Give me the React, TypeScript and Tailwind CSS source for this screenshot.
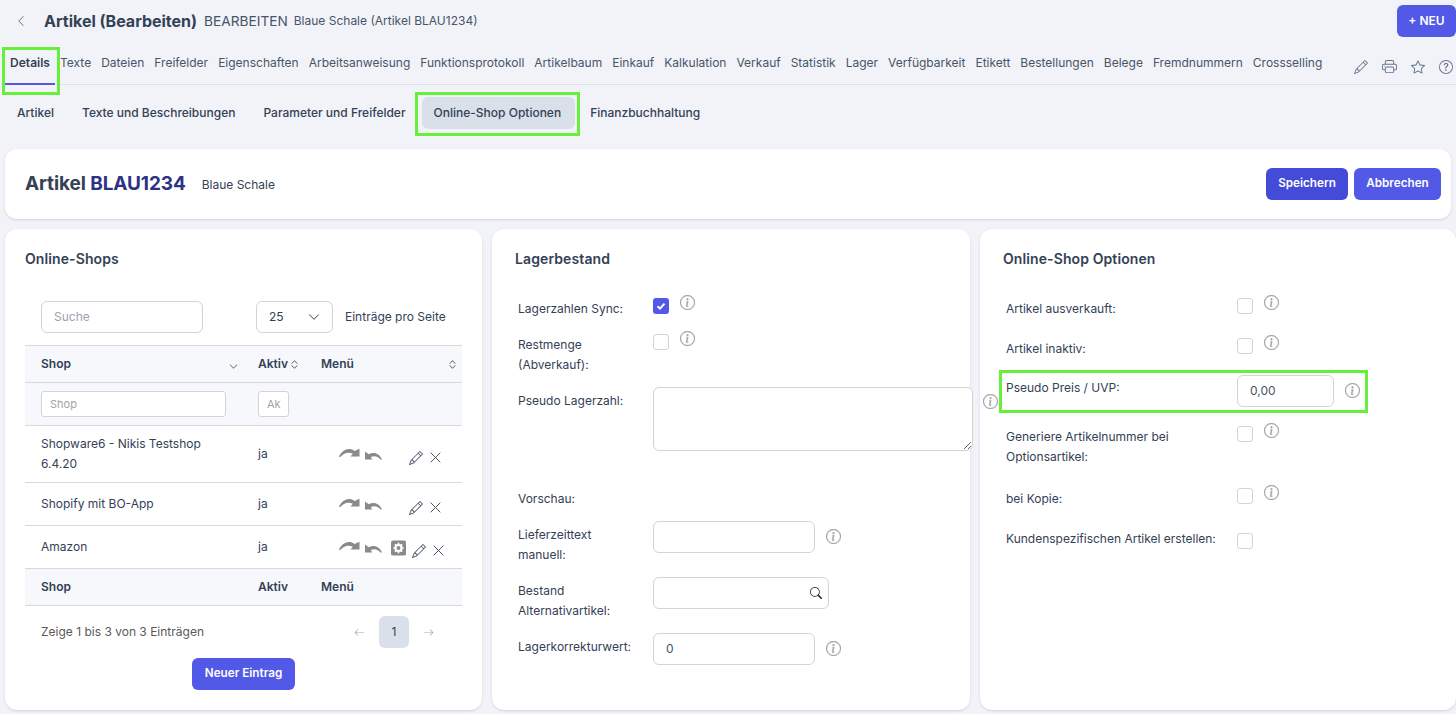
import React from "react";
import {
  BsChevronLeft, BsPencil, BsPrinter, BsStar, BsQuestionCircle, BsInfoCircle, BsSearch,
  BsArrowLeft, BsArrowRight, BsChevronExpand, BsChevronDown,
} from "react-icons/bs";

const tabs = ["Texte","Dateien","Freifelder","Eigenschaften","Arbeitsanweisung","Funktionsprotokoll","Artikelbaum","Einkauf","Kalkulation","Verkauf","Statistik","Lager","Verfügbarkeit","Etikett","Bestellungen","Belege","Fremdnummern","Crossselling"];

function Info({ className = "" }: { className?: string }) {
  return <BsInfoCircle className={`text-[#a3a3a3] stroke-current stroke-[0.3] text-[15px] shrink-0 ${className}`} />;
}

function Check({ checked = false, className = "" }: { checked?: boolean; className?: string }) {
  return checked ? (
    <span className={`w-4 h-4 rounded-[3px] bg-[#5159e6] flex items-center justify-center shrink-0 ${className}`}>
      <svg width="10" height="10" viewBox="0 0 10 10"><path d="M1.5 5.2 4 7.6 8.5 2.6" fill="none" stroke="#fff" strokeWidth="2" /></svg>
    </span>
  ) : (
    <span className={`w-4 h-4 rounded-[3px] bg-white border border-[#d4d4d4] shrink-0 ${className}`} />
  );
}

function Redo() {
  return (
    <svg width="21" height="10" viewBox="0 0 21 10" fill="#8a8a8a" className="shrink-0">
      <path d="M0 8.5C3 2 10-1.5 15.5 3L20.5 .8v7.7h-9l2.4-2.8C9 3.5 4.5 5 1 9.3Z" />
    </svg>
  );
}
function Undo() {
  return (
    <svg width="17" height="9" viewBox="0 0 17 9" fill="#8a8a8a" className="shrink-0 mt-[4px]">
      <path d="M0 .5V8.5h7.5L5.6 6.3C9 4.3 13 5 15.8 8.8L17 8.3C14.5 2.5 9 .2 3.8 3.2Z" />
    </svg>
  );
}
function GearBox() {
  return (
    <svg width="15" height="16" viewBox="0 0 16 16" className="shrink-0">
      <rect width="16" height="16" rx="2" fill="#8a8a8a" />
      <circle cx="8" cy="8" r="3.2" fill="none" stroke="#fff" strokeWidth="2.2" />
      <path d="M8 2.5v2M8 11.5v2M2.5 8h2M11.5 8h2M4.1 4.1l1.4 1.4M10.5 10.5l1.4 1.4M4.1 11.9l1.4-1.4M10.5 5.5l1.4-1.4" stroke="#fff" strokeWidth="1.8" />
    </svg>
  );
}
function Cross() {
  return (
    <svg width="11" height="11" viewBox="0 0 11 11" className="shrink-0">
      <path d="M.7.7l9.6 9.6M10.3.7.7 10.3" fill="none" stroke="#475569" strokeWidth="1" />
    </svg>
  );
}

function Row({ name, tall, gear }: { name: React.ReactNode; tall?: boolean; gear?: boolean }) {
  return (
    <tr className={`border-b border-[#d9d9d9] ${tall ? "h-[57px]" : "h-[43px]"}`}>
      <td className="pl-4 pr-2 leading-5">{name}</td>
      <td className="pl-4">ja</td>
      <td className="pl-[34px]">
        <div className="flex items-center">
          <div className="flex items-center gap-[5px] w-[52px] -mt-[2px]">
            <Redo />
            <Undo />
          </div>
          {gear ? (
            <div className="flex items-center mt-[2px]"><GearBox /></div>
          ) : (
            <div className="w-[18px]" />
          )}
          <div className={`flex items-center text-[#475569] mt-[7px] ${gear ? "ml-[6px]" : "ml-0"}`}>
            <BsPencil className="text-[14px]" />
            <span className="ml-[7px]"><Cross /></span>
          </div>
        </div>
      </td>
    </tr>
  );
}

function Field({ label, labelW, className, children }: { label: string; labelW: string; className: string; children: React.ReactNode }) {
  return (
    <div className={`flex items-start ${className}`}>
      <div className={`leading-5 shrink-0 ${labelW}`}>{label}</div>
      {children}
    </div>
  );
}

export default function App() {
  const input = "h-8 rounded-md border border-[#d4d4d4] bg-white";
  return (
    <div className="relative w-[1456px] h-[714px] overflow-hidden bg-[#f1f3f9] text-[#334155] text-[12px] font-['Inter',sans-serif]">
      {/* header */}
      <div className="flex items-start h-[47px] pt-[5px]">
        <div className="flex items-center h-8 flex-1">
          <BsChevronLeft className="ml-[15px] text-[#6b7280] text-[12px]" />
          <span className="ml-[17px] text-[16px] font-bold">Artikel (Bearbeiten)</span>
          <span className="ml-[7px] text-[13.7px] text-[#475569]">BEARBEITEN</span>
          <span className="ml-[6px] text-[12px] text-[#475569]">Blaue Schale (Artikel BLAU1234)</span>
        </div>
        <button className="w-[59px] h-8 rounded-md bg-[#5159e6] text-white font-semibold text-[12px]">+ NEU</button>
      </div>

      {/* tabs */}
      <div className="flex items-start h-[38px] border-b border-[#dbe2ee] text-[#475569]">
        <div className="ml-[5px] w-[50px] h-[38px] border-b-2 border-[#5159e6] text-center font-semibold text-[#334155] pt-[6px] leading-5">Details</div>
        <div className="flex gap-[10px] ml-[5px] pt-[6px] leading-5">
          {tabs.map((t) => <span key={t}>{t}</span>)}
        </div>
        <div className="ml-auto flex items-center gap-[14px] pt-[12px] mr-[3px] text-[#64748b]">
          <BsPencil className="text-[14px]" />
          <BsPrinter className="text-[15px]" />
          <BsStar className="text-[14px]" />
          <BsQuestionCircle className="text-[14px]" />
        </div>
      </div>

      {/* sub tabs */}
      <div className="flex items-center h-8 mt-[12px] ml-[3px] font-medium">
        <span className="px-[14px]">Artikel</span>
        <span className="px-[14px]">Texte und Beschreibungen</span>
        <span className="px-[14px]">Parameter und Freifelder</span>
        <span className="pl-[12px] pr-[14px] h-8 flex items-center rounded-md bg-[#d9e0ea] ml-[2px]">Online-Shop Optionen</span>
        <span className="pl-[15px] pr-[14px]">Finanzbuchhaltung</span>
      </div>

      {/* title card */}
      <div className="mx-[5px] mt-[20px] h-[70px] rounded-xl bg-white shadow-sm flex items-center px-5">
        <span className="text-[19px] font-bold tracking-[-0.1px]">Artikel <span className="text-[#2e3286]">BLAU1234</span></span>
        <span className="ml-[16px] mt-[2px]">Blaue Schale</span>
        <div className="ml-auto flex gap-[6px] -mr-[10px] font-semibold text-white text-[11.7px]">
          <button className="w-[82px] h-8 rounded-md bg-[#444bd8]">Speichern</button>
          <button className="w-[87px] h-8 rounded-md bg-[#5159e6]">Abbrechen</button>
        </div>
      </div>

      {/* panels */}
      <div className="flex gap-[10px] ml-[5px] mt-[10px]">
        {/* shops */}
        <div className="w-[477px] h-[481px] shrink-0 rounded-xl bg-white shadow-sm px-5 pt-[20px]">
          <h2 className="text-[14px] font-semibold leading-5 tracking-[0.1px]">Online-Shops</h2>
          <div className="flex items-center mt-[32px] ml-4">
            <div className={`${input} w-[162px] flex items-center px-3 text-[#9ca3af]`}>Suche</div>
            <div className={`${input} w-[77px] ml-[53px] flex items-center justify-between px-3`}>
              <span>25</span><BsChevronDown className="text-[12px]" />
            </div>
            <span className="ml-3">Einträge pro Seite</span>
          </div>
          <table className="w-[437px] mt-3 table-fixed border-collapse">
            <colgroup><col className="w-[217px]" /><col className="w-[63px]" /><col className="w-[157px]" /></colgroup>
            <thead className="bg-[#f6f8fc] font-semibold">
              <tr className="h-[37px] border-y border-[#d9d9d9]">
                <th className="pl-4 pr-[3px] text-left font-semibold">
                  <div className="flex items-center justify-between">Shop<BsChevronDown className="text-[9px] mt-1 mr-[1px] text-[#555]" /></div>
                </th>
                <th className="pl-4 text-left font-semibold">
                  <div className="flex items-center gap-[1px]">Aktiv<BsChevronExpand className="text-[11px] text-[#555]" /></div>
                </th>
                <th className="pl-4 pr-[4px] text-left font-semibold">
                  <div className="flex items-center justify-between">Menü<BsChevronExpand className="text-[11px] text-[#555]" /></div>
                </th>
              </tr>
              <tr className="h-[43px] border-b border-[#d9d9d9]">
                <td className="pl-4">
                  <div className="h-[26px] w-[185px] rounded-[3px] border border-[#d4d4d4] bg-white flex items-center px-2 text-[11px] font-normal text-[#a3a3a3]">Shop</div>
                </td>
                <td className="pl-4">
                  <div className="h-[26px] w-[31px] rounded-[3px] border border-[#d4d4d4] bg-white flex items-center px-2 text-[11px] font-normal text-[#a3a3a3]">Ak</div>
                </td>
                <td />
              </tr>
            </thead>
            <tbody>
              <Row tall name={<>Shopware6 - Nikis Testshop 6.4.20</>} />
              <Row name="Shopify mit BO-App" />
              <Row gear name="Amazon" />
            </tbody>
            <tfoot className="bg-[#f6f8fc]">
              <tr className="h-[37px] border-b border-[#d9d9d9] font-semibold">
                <td className="pl-4">Shop</td><td className="pl-4">Aktiv</td><td className="pl-4">Menü</td>
              </tr>
            </tfoot>
          </table>
          <div className="flex items-center mt-[10px] ml-4 text-[#595959]">
            <span className="w-[164px] shrink-0 whitespace-nowrap">Zeige 1 bis 3 von 3 Einträgen</span>
            <BsArrowLeft className="ml-[149px] text-[#a3a3a3] text-[11px]" />
            <span className="ml-[14px] w-[30px] h-8 rounded-md bg-[#d9e0ea] text-[#334155] flex items-center justify-center">1</span>
            <BsArrowRight className="ml-[14px] text-[#a3a3a3] text-[11px]" />
          </div>
          <div className="flex justify-center mt-[10px]">
            <button className="w-[103px] h-8 rounded-md bg-[#5159e6] text-white font-semibold text-[11.7px]">Neuer Eintrag</button>
          </div>
        </div>

        {/* stock */}
        <div className="w-[478px] h-[481px] shrink-0 rounded-xl bg-white shadow-sm pt-[20px] pl-[26px]">
          <h2 className="text-[14px] font-semibold leading-5 -ml-[3px] tracking-[0.1px]">Lagerbestand</h2>
          <div className="mt-[29px]">
            <Field label="Lagerzahlen Sync:" labelW="w-[135px] pt-[1px]" className="h-5">
              <Check checked /><Info className="ml-[11px] -mt-[3px]" />
            </Field>
            <Field label="Restmenge (Abverkauf):" labelW="w-[135px] pr-8 pt-[1px]" className="h-10 mt-4">
              <Check /><Info className="ml-[11px] -mt-[3px]" />
            </Field>
            <Field label="Pseudo Lagerzahl:" labelW="w-[135px] pt-[4px]" className="mt-[13px] h-16 relative">
              <textarea className="block w-[320px] h-16 shrink-0 rounded-md border border-[#d4d4d4] bg-white resize-y" readOnly />
              <Info className="absolute left-[465px] top-[7px]" />
            </Field>
            <Field label="Vorschau:" labelW="w-[135px] pt-[1px]" className="mt-[37px] h-5">
              <span />
            </Field>
            <Field label="Lieferzeittext manuell:" labelW="w-[135px] pt-[4px] pr-8" className="mt-[13px] h-[43px]">
              <div className={`${input} w-[162px]`} /><Info className="ml-[11px] mt-2" />
            </Field>
            <Field label="Bestand Alternativartikel:" labelW="w-[135px] pt-[4px]" className="mt-[13px] h-[43px]">
              <div className={`${input} w-[176px] flex items-center justify-end pr-[6px]`}><BsSearch className="text-[12px] text-[#1f2937]" /></div>
            </Field>
            <Field label="Lagerkorrekturwert:" labelW="w-[135px] pt-[4px]" className="mt-[13px] h-8">
              <div className={`${input} w-[162px] flex items-center px-3 text-[#475569]`}>0</div><Info className="ml-[11px] mt-2" />
            </Field>
          </div>
        </div>

        {/* options */}
        <div className="w-[476px] h-[481px] shrink-0 rounded-xl bg-white shadow-sm pt-[20px] pl-[26px]">
          <h2 className="text-[14px] font-semibold leading-5 -ml-[3px] tracking-[0.1px]">Online-Shop Optionen</h2>
          <div className="mt-[29px]">
            <Field label="Artikel ausverkauft:" labelW="w-[231px] pt-[1px]" className="h-5">
              <Check /><Info className="ml-[11px] -mt-[3px]" />
            </Field>
            <Field label="Artikel inaktiv:" labelW="w-[231px] pt-[1px]" className="h-5 mt-5">
              <Check /><Info className="ml-[11px] -mt-[3px]" />
            </Field>
            <Field label="Pseudo Preis / UVP:" labelW="w-[231px] pt-[3px]" className="h-8 mt-[17px]">
              <div className={`${input} w-[97px] flex items-center px-3 text-[#475569]`}>0,00</div><Info className="ml-[11px] mt-2" />
            </Field>
            <Field label="Generiere Artikelnummer bei Optionsartikel:" labelW="w-[231px] pr-8 pt-[1px]" className="h-10 mt-[19px]">
              <Check /><Info className="ml-[11px] -mt-[3px]" />
            </Field>
            <Field label="bei Kopie:" labelW="w-[231px] pt-[1px]" className="h-5 mt-[22px]">
              <Check /><Info className="ml-[11px] -mt-[3px]" />
            </Field>
            <Field label="Kundenspezifischen Artikel erstellen:" labelW="w-[231px] pt-[1px]" className="h-5 mt-5">
              <Check className="mt-[5px]" />
            </Field>
          </div>
        </div>
      </div>

      {/* highlight annotations */}
      <div className="absolute left-[2px] top-[47px] w-[58px] h-[48px] border-[3px] border-[#66f03c]" />
      <div className="absolute left-[415px] top-[92px] w-[165px] h-[44px] border-[3px] border-[#66f03c]" />
      <div className="absolute left-[999px] top-[370px] w-[369px] h-[43px] border-[3px] border-[#66f03c]" />
    </div>
  );
}
